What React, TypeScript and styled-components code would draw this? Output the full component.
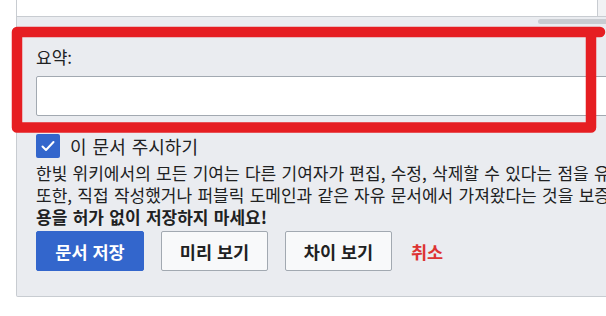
import React from 'react'
import styled, {createGlobalStyle} from 'styled-components'

const GlobalStyle = createGlobalStyle`
  html, body {
    margin: 0;
    padding: 0;
    background: #ffffff;
    overflow: hidden;
  }
  body {
    font-family: "Noto Sans CJK KR", "Noto Sans", sans-serif;
    color: #202122;
  }
`

const Page = styled.div`
  position: relative;
  width: 606px;
  height: 316px;
  padding-left: 16px;
  box-sizing: border-box;
  overflow: hidden;
`

const Panel = styled.div`
  width: 640px;
  background: #eaecf0;
  border: 1px solid #c8ccd1;
  border-top: none;
  border-radius: 0 0 2px 2px;
  box-sizing: border-box;
`

const EditorRow = styled.div`
  display: flex;
  height: 17px;
  border-bottom: 1px solid #c8ccd1;
  box-sizing: border-box;
`

const EditorArea = styled.div`
  flex: 0 0 580px;
  background: #ffffff;
`

const ScrollTrack = styled.div`
  flex: 1;
  background: #f1f2f4;
  border-left: 1px solid #c8ccd1;
`

const ThumbRow = styled.div`
  display: flex;
  padding: 2px 0 0 521px;
  height: 5px;
`

const Thumb = styled.div`
  width: 110px;
  height: 5px;
  border-radius: 3px;
  background: #c8ccd1;
`

const Options = styled.div`
  display: flex;
  flex-direction: column;
  padding: 21px 0 25px 19px;
  white-space: nowrap;
`

const SummaryLabel = styled.label`
  font-size: 17px;
  line-height: 24px;
`

const SummaryInput = styled.div`
  margin-top: 7px;
  width: 600px;
  height: 40px;
  background: #ffffff;
  border: 1px solid #a2a9b1;
  border-radius: 2px;
  box-sizing: border-box;
`

const WatchRow = styled.div`
  display: flex;
  align-items: center;
  gap: 10px;
  margin-top: 18px;
  height: 24px;
`

const CheckBox = styled.span`
  display: flex;
  align-items: center;
  justify-content: center;
  width: 24px;
  height: 24px;
  border-radius: 2px;
  background: #3366cc;
`

const WatchLabel = styled.span`
  font-size: 18px;
  line-height: 24px;
  word-spacing: 2px;
`

const Notice = styled.div`
  margin-top: 4px;
  font-size: 17px;
  line-height: 22px;
  word-spacing: 1.5px;
`

const NoticeLine = styled.div<{$bold?: boolean}>`
  font-weight: ${(p) => (p.$bold ? 700 : 400)};
`

const ButtonRow = styled.div`
  display: flex;
  align-items: center;
  gap: 17px;
  margin-top: 3px;
`

const Button = styled.button<{$primary?: boolean}>`
  height: 40px;
  width: ${(p) => (p.$primary ? '108px' : '107px')};
  padding: 0;
  border-radius: 2px;
  border: 1px solid ${(p) => (p.$primary ? '#3366cc' : '#a2a9b1')};
  background: ${(p) => (p.$primary ? '#3366cc' : '#f8f9fa')};
  color: ${(p) => (p.$primary ? '#ffffff' : '#202122')};
  font-family: "Noto Sans CJK KR", sans-serif;
  font-size: 17.5px;
  font-weight: 700;
  word-spacing: 1px;
  box-sizing: border-box;
`

const CancelLink = styled.a`
  margin-left: 2px;
  color: #dd3333;
  font-size: 17.5px;
  font-weight: 700;
  text-decoration: none;
`

const Annotation = styled.svg`
  position: absolute;
  left: 0;
  top: 0;
  pointer-events: none;
`

export default function App() {
  return (
    <>
      <GlobalStyle />
      <Page>
        <Panel>
          <EditorRow>
            <EditorArea />
            <ScrollTrack />
          </EditorRow>
          <ThumbRow>
            <Thumb />
          </ThumbRow>
          <Options>
            <SummaryLabel>요약:</SummaryLabel>
            <SummaryInput />
            <WatchRow>
              <CheckBox>
                <svg width='16' height='16' viewBox='0 0 16 16'>
                  <polyline
                    points='2.5,8.5 6,12 13.5,4'
                    fill='none'
                    stroke='#ffffff'
                    strokeWidth='2'
                    strokeLinecap='round'
                    strokeLinejoin='round'
                  />
                </svg>
              </CheckBox>
              <WatchLabel>이 문서 주시하기</WatchLabel>
            </WatchRow>
            <Notice>
              <NoticeLine>
                한빛 위키에서의 모든 기여는 다른 기여자가 편집, 수정, 삭제할 수 있다는 점을 유의해 주세요.
              </NoticeLine>
              <NoticeLine>
                또한, 직접 작성했거나 퍼블릭 도메인과 같은 자유 문서에서 가져왔다는 것을 보증해야 합니다.
              </NoticeLine>
              <NoticeLine $bold>용을 허가 없이 저장하지 마세요!</NoticeLine>
            </Notice>
            <ButtonRow>
              <Button $primary>문서 저장</Button>
              <Button>미리 보기</Button>
              <Button>차이 보기</Button>
              <CancelLink href='#'>취소</CancelLink>
            </ButtonRow>
          </Options>
        </Panel>
        <Annotation width='606' height='316' viewBox='0 0 606 316'>
          <path
            d='M600 32 L17 32 L17 127.5 L591 127.5 L591 32'
            fill='none'
            stroke='#e61e22'
            strokeWidth='10.5'
            strokeLinecap='round'
            strokeLinejoin='round'
          />
        </Annotation>
      </Page>
    </>
  )
}
